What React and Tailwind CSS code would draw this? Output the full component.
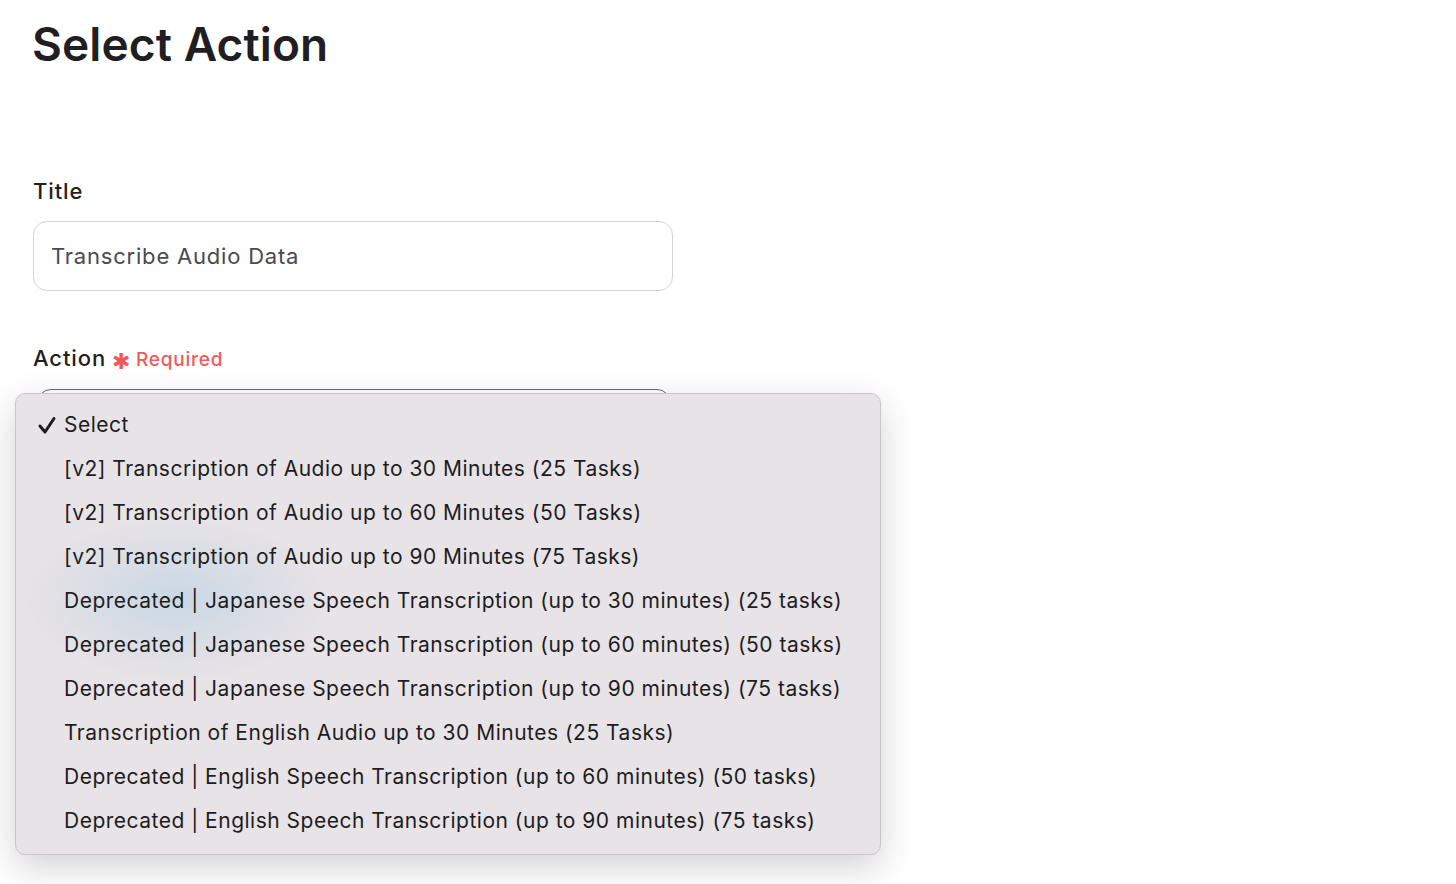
import React from "react";

const options = [
  "Select",
  "[v2] Transcription of Audio up to 30 Minutes (25 Tasks)",
  "[v2] Transcription of Audio up to 60 Minutes (50 Tasks)",
  "[v2] Transcription of Audio up to 90 Minutes (75 Tasks)",
  "Deprecated | Japanese Speech Transcription (up to 30 minutes) (25 tasks)",
  "Deprecated | Japanese Speech Transcription (up to 60 minutes) (50 tasks)",
  "Deprecated | Japanese Speech Transcription (up to 90 minutes) (75 tasks)",
  "Transcription of English Audio up to 30 Minutes (25 Tasks)",
  "Deprecated | English Speech Transcription (up to 60 minutes) (50 tasks)",
  "Deprecated | English Speech Transcription (up to 90 minutes) (75 tasks)",
];

export default function App() {
  return (
    <div
      className="relative w-[1456px] h-[884px] overflow-hidden bg-white text-[#1d1d21]"
      style={{ fontFamily: "Inter, 'Noto Sans', sans-serif" }}
    >
      <div className="pl-[33px] pt-[16px]">
        <h1 className="-ml-[1px] text-[46px] leading-[56px] font-semibold tracking-[0.1px] text-[#1f1f23]">
          Select Action
        </h1>

        {/* Title field */}
        <div className="mt-[105px]">
          <label className="block text-[22px] leading-[28px] font-medium tracking-[0.9px] text-[#1f1f23]">
            Title
          </label>
          <div className="mt-[16px] w-[640px] h-[70px] rounded-[14px] border border-[#d4d3dc] flex items-center px-[17px]">
            <span className="text-[22px] tracking-[0.8px] text-[#4a4a52]">
              Transcribe Audio Data
            </span>
          </div>
        </div>

        {/* Action field */}
        <div className="mt-[53px]">
          <div className="flex items-baseline gap-[6px]">
            <span className="text-[22px] leading-[28px] font-medium tracking-[0.9px] text-[#1f1f23]">
              Action
            </span>
            <span className="text-[19px] font-medium tracking-[0.8px] text-[#f25a5a] flex items-baseline gap-[5px]">
              <span className="text-[22px] leading-none relative top-[3px]">✱</span>
              Required
            </span>
          </div>
          <div className="mt-[14px] w-[634px] ml-[4px] h-[70px] rounded-[14px] border border-[#6b6b70]"></div>
        </div>
      </div>

      {/* native select menu */}
      <div className="absolute left-[15px] top-[393px] w-[866px] h-[462px] rounded-[10px] border border-[#c9c5c9] bg-[#e8e3e7] shadow-[0_12px_36px_rgba(0,0,0,0.18)] overflow-hidden">
        <div className="absolute left-[0px] top-[120px] w-[320px] h-[170px] rounded-full bg-[radial-gradient(ellipse_at_center,rgba(170,205,225,0.5),rgba(232,227,231,0)_70%)]"></div>
        <div className="relative pt-[9px]">
          {options.map((o, i) => (
            <div key={i} className="h-[44px] flex items-center">
              <div className="w-[48px] flex justify-end pr-[7px]">
                {i === 0 && (
                  <svg width="20" height="20" viewBox="0 0 20 20">
                    <path
                      d="M3 11 L8 17 L17 3.5"
                      fill="none"
                      stroke="#1d1d21"
                      strokeWidth="3"
                      strokeLinecap="round"
                      strokeLinejoin="round"
                    />
                  </svg>
                )}
              </div>
              <span className="text-[21px] tracking-[0.5px] text-[#1d1d21] whitespace-nowrap">
                {o}
              </span>
            </div>
          ))}
        </div>
      </div>
    </div>
  );
}
